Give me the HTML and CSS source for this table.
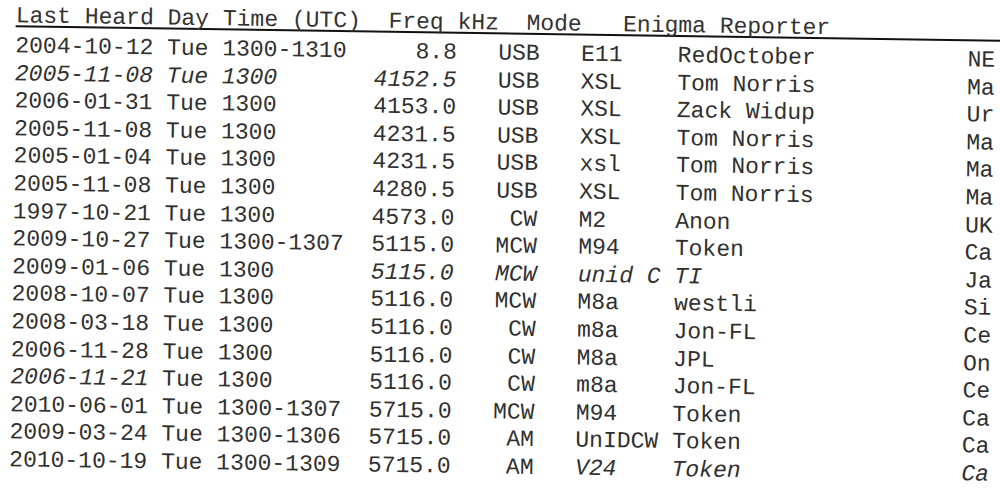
FILE: index.html
```html
<!DOCTYPE html>
<html lang="en">
<head>
<meta charset="utf-8">
<title>Log</title>
<link rel="stylesheet" href="styles.css">
</head>
<body>
<div class="sheet">
  <div class="head"><span>Last</span> <span>Heard</span> <span>Day</span> <span>Time</span> <span>(UTC)</span>  <span>Freq</span> <span>kHz</span>  <span>Mode</span>   <span>Enigma</span> <span>Reporter</span></div>
  <div class="rows">
    <div class="row"><span>2004-10-12</span><span>Tue</span><span>1300-1310</span><span class="r">8.8</span><span class="r">USB</span><span class="e">E11</span><span>RedOctober</span><span>NE</span></div>
    <div class="row"><span class="i">2005-11-08</span><span class="i">Tue</span><span class="i">1300</span><span class="r i">4152.5</span><span class="r">USB</span><span class="e">XSL</span><span>Tom Norris</span><span>Ma</span></div>
    <div class="row"><span>2006-01-31</span><span>Tue</span><span>1300</span><span class="r">4153.0</span><span class="r">USB</span><span class="e">XSL</span><span>Zack Widup</span><span>Ur</span></div>
    <div class="row"><span>2005-11-08</span><span>Tue</span><span>1300</span><span class="r">4231.5</span><span class="r">USB</span><span class="e">XSL</span><span>Tom Norris</span><span>Ma</span></div>
    <div class="row"><span>2005-01-04</span><span>Tue</span><span>1300</span><span class="r">4231.5</span><span class="r">USB</span><span class="e">xsl</span><span>Tom Norris</span><span>Ma</span></div>
    <div class="row"><span>2005-11-08</span><span>Tue</span><span>1300</span><span class="r">4280.5</span><span class="r">USB</span><span class="e">XSL</span><span>Tom Norris</span><span>Ma</span></div>
    <div class="row"><span>1997-10-21</span><span>Tue</span><span>1300</span><span class="r">4573.0</span><span class="r">CW</span><span class="e">M2</span><span>Anon</span><span>UK</span></div>
    <div class="row"><span>2009-10-27</span><span>Tue</span><span>1300-1307</span><span class="r">5115.0</span><span class="r">MCW</span><span class="e">M94</span><span>Token</span><span>Ca</span></div>
    <div class="row"><span>2009-01-06</span><span>Tue</span><span>1300</span><span class="r i">5115.0</span><span class="r i">MCW</span><span class="e i">unid C</span><span class="i">TI</span><span>Ja</span></div>
    <div class="row"><span>2008-10-07</span><span>Tue</span><span>1300</span><span class="r">5116.0</span><span class="r">MCW</span><span class="e">M8a</span><span>westli</span><span>Si</span></div>
    <div class="row"><span>2008-03-18</span><span>Tue</span><span>1300</span><span class="r">5116.0</span><span class="r">CW</span><span class="e">m8a</span><span>Jon-FL</span><span>Ce</span></div>
    <div class="row"><span>2006-11-28</span><span>Tue</span><span>1300</span><span class="r">5116.0</span><span class="r">CW</span><span class="e">M8a</span><span>JPL</span><span>On</span></div>
    <div class="row"><span class="i">2006-11-21</span><span>Tue</span><span>1300</span><span class="r">5116.0</span><span class="r">CW</span><span class="e">m8a</span><span>Jon-FL</span><span>Ce</span></div>
    <div class="row"><span>2010-06-01</span><span>Tue</span><span>1300-1307</span><span class="r">5715.0</span><span class="r">MCW</span><span class="e">M94</span><span>Token</span><span>Ca</span></div>
    <div class="row"><span>2009-03-24</span><span>Tue</span><span>1300-1306</span><span class="r">5715.0</span><span class="r">AM</span><span class="e">UnIDCW</span><span>Token</span><span>Ca</span></div>
    <div class="row"><span>2010-10-19</span><span>Tue</span><span>1300-1309</span><span class="r">5715.0</span><span class="r">AM</span><span class="e i">V24</span><span class="i">Token</span><span class="i">Ca</span></div>
  </div>
</div>
</body>
</html>
```
FILE: styles.css
```css
html, body {
  margin: 0;
  padding: 0;
  background: #ffffff;
  overflow: hidden;
  width: 1000px;
  height: 490px;
}

.sheet {
  width: 1120px;
  padding-left: 16px;
  font-family: "Liberation Mono", "DejaVu Sans Mono", monospace;
  font-size: 23px;
  color: #303030;
  transform: rotate(0.85deg);
  transform-origin: 0 0;
}

.head {
  white-space: pre;
  line-height: 18px;
  padding-top: 7px;
  border-bottom: 2px solid #111111;
  color: #333333;
}

.rows {
  margin-top: 6px;
}

.row {
  display: grid;
  grid-template-columns: 11ch 4ch 9ch 8ch 6ch 10ch 21ch auto;
  line-height: 27.6px;
  white-space: pre;
}

.row .r {
  text-align: right;
}

.row .e {
  padding-left: 3ch;
}

.i {
  font-style: italic;
}
```
